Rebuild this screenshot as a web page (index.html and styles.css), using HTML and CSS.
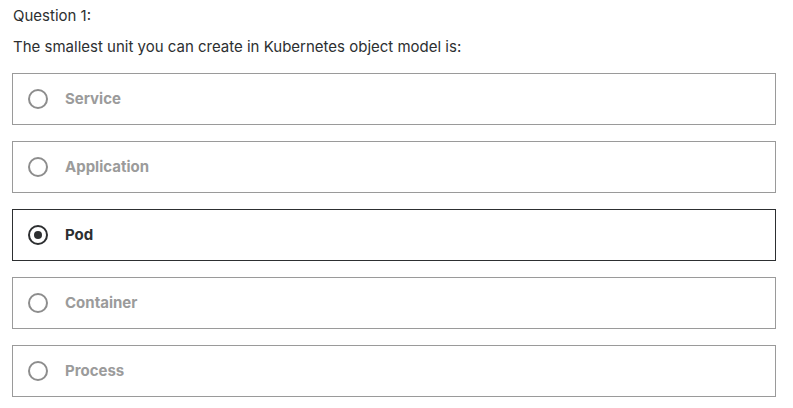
FILE: index.html
```html
<!DOCTYPE html>
<html>
<head>
<meta charset="utf-8">
<link rel="stylesheet" href="styles.css">
</head>
<body>
<div class="quiz">
  <div class="qnum">Question 1:</div>
  <div class="qtext">The smallest unit you can create in Kubernetes object model is:</div>
  <div class="options">
    <label class="opt"><span class="radio"></span><span class="label">Service</span></label>
    <label class="opt"><span class="radio"></span><span class="label">Application</span></label>
    <label class="opt selected"><span class="radio"></span><span class="label">Pod</span></label>
    <label class="opt"><span class="radio"></span><span class="label">Container</span></label>
    <label class="opt"><span class="radio"></span><span class="label">Process</span></label>
  </div>
</div>
</body>
</html>
```
FILE: styles.css
```css
html, body { margin: 0; padding: 0; background: #fff; }
body { font-family: Inter, "Liberation Sans", Arial, sans-serif; color: #2d2f31; }
.quiz { padding: 6px 17px 0 12px; }
.qnum { font-size: 15px; line-height: 20px; padding-left: 1px; }
.qtext { font-size: 15px; line-height: 20px; margin-top: 11px; padding-left: 1px; }
.options { display: flex; flex-direction: column; gap: 16px; margin-top: 16px; }
.opt { display: flex; align-items: center; height: 50px; border: 1px solid #9a9a9a; padding-left: 15px; box-sizing: content-box; }
.radio { width: 16px; height: 16px; border: 2px solid #8d8d8d; border-radius: 50%; position: relative; flex: none; }
.label { margin-left: 17px; font-size: 15px; font-weight: bold; color: #9b9b9b; line-height: 18px; margin-top: -1px; }
.selected { border-color: #2d2f31; }
.selected .radio { border-color: #2d2f31; }
.selected .radio::after { content: ""; position: absolute; left: 4px; top: 4px; width: 8px; height: 8px; border-radius: 50%; background: #2d2f31; }
.selected .label { color: #2d2f31; }
```
